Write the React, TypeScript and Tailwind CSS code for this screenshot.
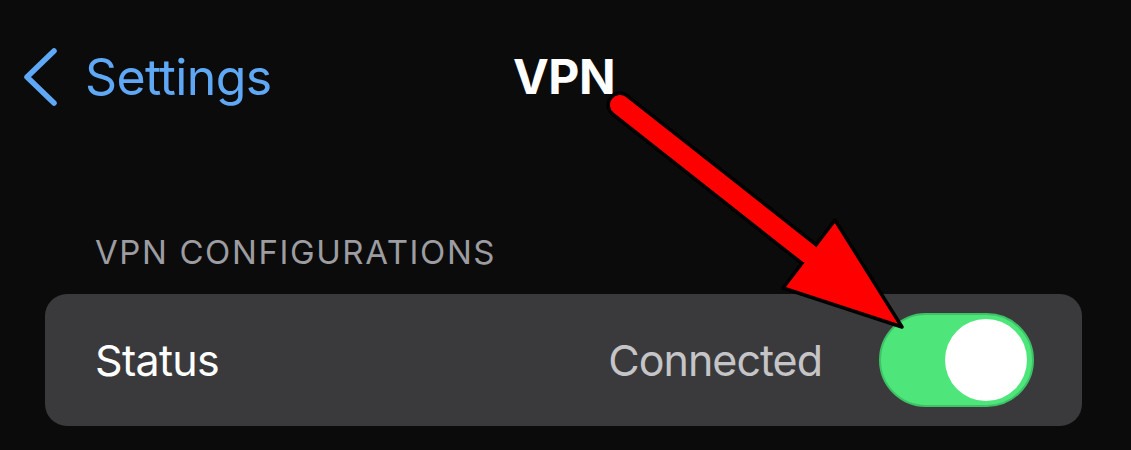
export default function App() {
  return (
    <div
      className="relative w-[1131px] h-[450px] overflow-hidden bg-[#0b0b0b]"
      style={{ fontFamily: "Inter, 'Liberation Sans', sans-serif" }}
    >
      {/* nav bar */}
      <div className="mt-[42px] h-[70px] flex items-center">
        <div className="w-[513px] flex items-center pl-[22px]">
          <svg width="36" height="60" viewBox="0 0 36 60" className="shrink-0">
            <path
              d="M32 4 L5 30 L32 56"
              fill="none"
              stroke="#5fa8f6"
              strokeWidth="5.5"
              strokeLinecap="round"
              strokeLinejoin="round"
            />
          </svg>
          <span className="ml-[27px] text-[50px] leading-none text-[#5fa8f6] tracking-[-0.6px]">
            Settings
          </span>
        </div>
        <div className="text-[48px] leading-none font-bold text-white tracking-[-0.5px]">VPN</div>
      </div>

      {/* section header */}
      <div className="mt-[120px] pl-[95px] text-[33px] leading-[40px] text-[#9c9ca1] tracking-[1.6px]">
        VPN CONFIGURATIONS
      </div>

      {/* row */}
      <div className="mt-[22px] ml-[45px] w-[1037px] h-[132px] rounded-[22px] bg-[#3a3a3c] flex items-center pl-[50px] pr-[48px]">
        <span className="text-[43px] leading-none text-white tracking-[-0.7px]">Status</span>
        <span className="ml-auto text-[43px] leading-none text-[#c5c5c8] tracking-[-1px]">Connected</span>
        <div className="ml-[57px] w-[155px] h-[94px] rounded-full bg-[#4ee57b] border-[2px] border-[#3cc365] flex items-center justify-end pr-[5px]">
          <div className="w-[82px] h-[82px] rounded-full bg-white" />
        </div>
      </div>

      {/* annotation arrow */}
      <svg
        className="absolute left-0 top-0 pointer-events-none"
        width="1131"
        height="450"
        viewBox="0 0 1131 450"
      >
        <line x1="620" y1="105" x2="809" y2="254" stroke="#000" strokeWidth="27" strokeLinecap="round" />
        <polygon
          points="835,220 783,288 902,327"
          fill="#ff0000"
          stroke="#000"
          strokeWidth="3.5"
          strokeLinejoin="round"
        />
        <line x1="620" y1="105" x2="809" y2="254" stroke="#ff0000" strokeWidth="20" strokeLinecap="round" />
      </svg>
    </div>
  );
}
